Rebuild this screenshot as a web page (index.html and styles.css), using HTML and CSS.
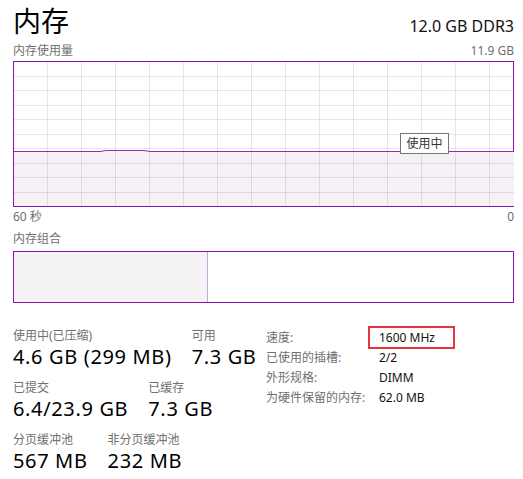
FILE: index.html
```html
<!DOCTYPE html>
<html lang="zh-CN">
<head>
<meta charset="utf-8">
<title>内存</title>
<link rel="stylesheet" href="styles.css">
</head>
<body>
<div class="page">
  <header class="head">
    <h1 class="title">内存</h1>
    <div class="spec">12.0 GB DDR3</div>
  </header>

  <div class="axis axis-top"><span>内存使用量</span><span>11.9 GB</span></div>
  <div class="graph">
    <svg class="graph-svg" width="500" height="144" viewBox="0 0 500 144" shape-rendering="crispEdges">
      <path class="area" d="M0 89 H86 L92 88 H130 L136 89 H500 V144 H0 Z"/>
      <g class="grid">
        <path d="M33.5 0V144M67.5 0V144M101.5 0V144M135.5 0V144M169.5 0V144M203.5 0V144M237.5 0V144M271.5 0V144M305.5 0V144M339.5 0V144M373.5 0V144M407.5 0V144M441.5 0V144M475.5 0V144"/>
        <path d="M0 14.5H500M0 28.5H500M0 43.5H500M0 57.5H500M0 72.5H500M0 86.5H500M0 101.5H500M0 115.5H500M0 130.5H500"/>
      </g>
      <path class="line" d="M0 89.5 H86 L92 88.5 H130 L136 89.5 H500" shape-rendering="geometricPrecision"/>
    </svg>
    <div class="tip">使用中</div>
  </div>
  <div class="axis axis-bottom"><span>60 秒</span><span>0</span></div>

  <div class="section-label">内存组合</div>
  <div class="compose"><div class="compose-used"></div></div>

  <div class="stats">
    <div class="stats-left">
      <div class="stat-row">
        <div class="stat"><div class="stat-label">使用中(已压缩)</div><div class="stat-value">4.6 GB (299 MB)</div></div>
        <div class="stat"><div class="stat-label">可用</div><div class="stat-value">7.3 GB</div></div>
      </div>
      <div class="stat-row">
        <div class="stat"><div class="stat-label">已提交</div><div class="stat-value">6.4/23.9 GB</div></div>
        <div class="stat"><div class="stat-label">已缓存</div><div class="stat-value">7.3 GB</div></div>
      </div>
      <div class="stat-row">
        <div class="stat"><div class="stat-label">分页缓冲池</div><div class="stat-value">567 MB</div></div>
        <div class="stat"><div class="stat-label">非分页缓冲池</div><div class="stat-value">232 MB</div></div>
      </div>
    </div>
    <dl class="specs">
      <dt>速度:</dt><dd class="hl">1600 MHz<span class="hl-box"></span></dd>
      <dt>已使用的插槽:</dt><dd>2/2</dd>
      <dt>外形规格:</dt><dd>DIMM</dd>
      <dt>为硬件保留的内存:</dt><dd>62.0 MB</dd>
    </dl>
  </div>
</div>
</body>
</html>
```

FILE: styles.css
```css
* { box-sizing: border-box; }
html, body { margin: 0; padding: 0; background: #fff; }
body {
  font-family: "Noto Sans", "Noto Sans CJK SC", sans-serif;
  color: #000;
}
.page {
  width: 523px;
  height: 479px;
  padding: 0 9px 0 13px;
  overflow: hidden;
}
.head {
  display: flex;
  justify-content: space-between;
  align-items: baseline;
  height: 42px;
}
.title {
  margin: 0;
  font-size: 28px;
  font-weight: 400;
  line-height: 40px;
  font-family: "Noto Sans CJK SC", sans-serif;
}
.spec {
  font-size: 16px;
  line-height: 20px;
  color: #111;
}
.axis {
  display: flex;
  justify-content: space-between;
  font-size: 12px;
  line-height: 16px;
  color: #6f6f6f;
}
.axis-top { height: 19px; align-items: flex-end; padding-bottom: 2px; }
.axis-bottom { height: 20px; padding-top: 2px; }
.graph {
  position: relative;
  height: 146px;
  border: 1px solid #8b12ae;
}
.graph-svg { display: block; }
.area { fill: #f4f2f4; }
.grid path { stroke: rgba(139, 18, 174, 0.13); stroke-width: 1; fill: none; }
.line { stroke: #8b12ae; stroke-width: 1; fill: none; opacity: 0.9; }
.tip {
  position: absolute;
  left: 386px;
  top: 71px;
  width: 49px;
  height: 21px;
  border: 1px solid #767676;
  background: #fff;
  font-size: 12px;
  line-height: 19px;
  text-align: center;
  color: #333;
}
.section-label {
  font-size: 12px;
  line-height: 16px;
  color: #6f6f6f;
  height: 24px;
  padding-top: 4px;
}
.compose {
  height: 52px;
  border: 1px solid #8b12ae;
  display: flex;
}
.compose-used {
  width: 194px;
  background: #f4f2f4;
  border-right: 1px solid #c8a8d6;
}
.stats {
  display: flex;
  margin-top: 25px;
}
.stats-left {
  width: 253px;
  display: flex;
  flex-direction: column;
  gap: 10px;
}
.stat-row { display: flex; gap: 20px; }
.stat-label {
  font-size: 12px;
  line-height: 16px;
  color: #6f6f6f;
}
.stat-value {
  font-size: 20px;
  line-height: 26px;
  letter-spacing: 0.65px;
  color: #000;
  white-space: nowrap;
}
.specs {
  margin: 0;
  display: grid;
  grid-template-columns: 113px auto;
  grid-auto-rows: 20px;
  font-size: 12px;
  line-height: 20px;
  align-content: start;
}
.specs dt { color: #6f6f6f; }
.specs dd { margin: 0; color: #111; }
.hl { position: relative; }
.hl-box {
  position: absolute;
  left: -11px;
  top: -2px;
  width: 87px;
  height: 23px;
  border: 2px solid #e8353b;
}
```
